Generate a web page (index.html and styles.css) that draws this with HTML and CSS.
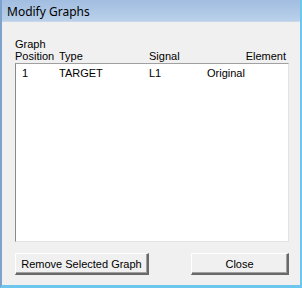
FILE: index.html
```html
<!DOCTYPE html>
<html lang="en">

<head>
  <meta charset="UTF-8">
  <title>Modify Graphs</title>
  <link rel="stylesheet" href="styles.css">
</head>

<body>

  <div class="window">
    <div class="title-bar">Modify Graphs</div>

    <div class="client">
      <div class="list-head">
        <div class="col-pos">Graph<br>Position</div>
        <div class="col-type">Type</div>
        <div class="col-signal">Signal</div>
        <div class="col-element">Element</div>
      </div>

      <div class="list-box">
        <div class="row">
          <div class="col-pos">1</div>
          <div class="col-type">TARGET</div>
          <div class="col-signal">L1</div>
          <div class="col-value">Original</div>
        </div>
      </div>

      <div class="buttons">
        <button class="btn btn-remove">Remove Selected Graph</button>
        <button class="btn btn-close">Close</button>
      </div>
    </div>
  </div>

</body>

</html>
```

FILE: styles.css
```css
* {
  box-sizing: border-box;
}

body {
  margin: 0;
  background: #f0f0f0;
  font-family: "Liberation Sans", Arial, sans-serif;
  font-size: 11px;
  color: #000;
}

.window {
  width: 302px;
  height: 288px;
  display: flex;
  flex-direction: column;
  border-left: 2px solid #7fa2cc;
  border-right: 2px solid #6cc6ee;
  border-bottom: 3px solid #6cc6ee;
  background: #f0f0f0;
}

.title-bar {
  height: 22px;
  padding-left: 5px;
  line-height: 23px;
  font-family: "Noto Sans", "DejaVu Sans", sans-serif;
  font-size: 12px;
  background: linear-gradient(#a1bde0, #b9d1ea);
  border-bottom: 1px solid #c9d9ea;
}

.client {
  flex: 1;
  padding: 16px 0 0 13px;
}

.list-head,
.row {
  display: grid;
  grid-template-columns: 44px 90px 57px 81px;
  line-height: 12px;
}

.list-head {
  width: 273px;
  align-items: end;
  padding-bottom: 1px;
}

.col-pos {
  padding-left: 0;
}

.col-element {
  text-align: right;
  padding-right: 1px;
}

.list-box {
  width: 274px;
  height: 179px;
  background: #fff;
  border-top: 1px solid #a0a0a0;
  border-left: 1px solid #8a8a8a;
  border-right: 1px solid #e3e3e3;
  border-bottom: 1px solid #e3e3e3;
  padding-top: 3px;
}

.row .col-pos {
  padding-left: 6px;
}

.row {
  grid-template-columns: 43px 90px 58px 81px;
}

.buttons {
  display: flex;
  justify-content: space-between;
  width: 274px;
  margin-top: 11px;
}

.btn {
  height: 22px;
  padding: 0;
  font: inherit;
  color: #000;
  background: #f0f0f0;
  border-top: 1px solid #fff;
  border-left: 1px solid #fff;
  border-right: 2px solid #696969;
  border-bottom: 2px solid #696969;
  box-shadow: inset -1px -1px 0 #a0a0a0;
}

.btn-remove {
  width: 134px;
}

.btn-close {
  width: 98px;
}
```
